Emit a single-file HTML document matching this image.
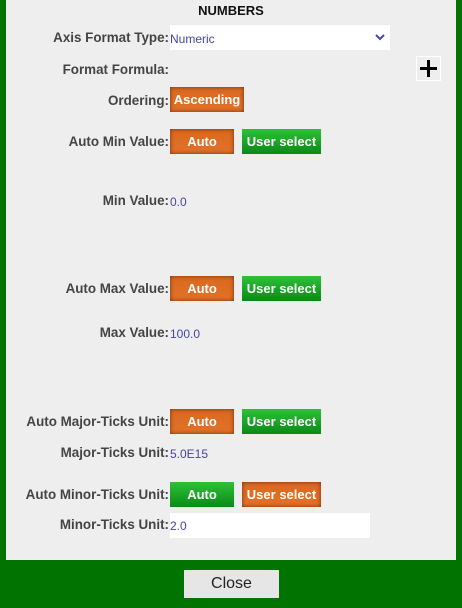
<!DOCTYPE html>
<html><head><meta charset="utf-8"><style>
body{margin:0;width:462px;height:608px;background:#007300;position:relative;overflow:hidden;font-family:"Liberation Sans",Arial,sans-serif;}
.panel{position:absolute;left:6px;top:0;width:450px;height:560px;background:#eeeeee;}
.l{position:absolute;right:293px;font-size:13.4px;font-weight:bold;color:#444;white-space:nowrap;line-height:16px;margin-top:1px;}
.v{position:absolute;left:170px;font-size:12px;color:#4444aa;line-height:16px;margin-top:1px;}
.b{position:absolute;height:25px;line-height:25px;font-size:13px;font-weight:bold;color:#fff;text-align:center;box-sizing:border-box;}
.o{background:linear-gradient(#d9691f,#e37128);box-shadow:inset 0 0 4px #6b3010;}
.g{background:linear-gradient(#2fc03a,#0a8a16);}
</style></head><body>
<div class="panel"></div>
<div style="position:absolute;left:0;width:462px;top:3px;text-align:center;font-size:13px;font-weight:bold;color:#111;">NUMBERS</div>
<div class="l" style="top:29px">Axis Format Type:</div>
<div style="position:absolute;left:170px;top:25px;width:220px;height:25px;background:#fff;"></div>
<div class="v" style="top:30px">Numeric</div>
<svg style="position:absolute;left:375px;top:33px" width="10" height="8"><path d="M1 2 L5 6 L9 2" stroke="#4444aa" stroke-width="2" fill="none"/></svg>
<div class="l" style="top:61px">Format Formula:</div>
<div style="position:absolute;left:416px;top:56px;width:25px;height:25px;box-sizing:border-box;border:1px solid #fff;"></div>
<div style="position:absolute;left:420px;top:67px;width:17px;height:3px;background:#000"></div>
<div style="position:absolute;left:427px;top:60px;width:3px;height:17px;background:#000"></div>
<div class="l" style="top:92px">Ordering:</div>
<div class="b o" style="left:170px;top:87px;width:74px">Ascending</div>
<div class="l" style="top:133px">Auto Min Value:</div>
<div class="b o" style="left:170px;top:129px;width:64px">Auto</div>
<div class="b g" style="left:242px;top:129px;width:79px">User select</div>
<div class="l" style="top:192px">Min Value:</div>
<div class="v" style="top:193px">0.0</div>
<div class="l" style="top:280px">Auto Max Value:</div>
<div class="b o" style="left:170px;top:276px;width:64px">Auto</div>
<div class="b g" style="left:242px;top:276px;width:79px">User select</div>
<div class="l" style="top:324px">Max Value:</div>
<div class="v" style="top:325px">100.0</div>
<div class="l" style="top:413px">Auto Major-Ticks Unit:</div>
<div class="b o" style="left:170px;top:409px;width:64px">Auto</div>
<div class="b g" style="left:242px;top:409px;width:79px">User select</div>
<div class="l" style="top:444px">Major-Ticks Unit:</div>
<div class="v" style="top:445px">5.0E15</div>
<div class="l" style="top:486px">Auto Minor-Ticks Unit:</div>
<div class="b g" style="left:170px;top:482px;width:64px">Auto</div>
<div class="b o" style="left:242px;top:482px;width:79px">User select</div>
<div class="l" style="top:516px">Minor-Ticks Unit:</div>
<div style="position:absolute;left:170px;top:513px;width:200px;height:25px;background:#fff;"></div>
<div class="v" style="top:517px">2.0</div>
<div style="position:absolute;left:184px;top:570px;width:95px;height:28px;background:#e6e6e6;text-align:center;line-height:28px;font-size:16px;color:#222;">Close</div>
</body></html>
